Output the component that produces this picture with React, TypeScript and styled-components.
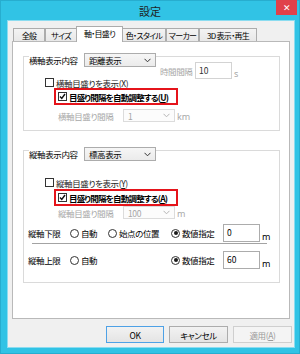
import React from "react";
import styled, { createGlobalStyle } from "styled-components";

const Global = createGlobalStyle`
  html, body { margin: 0; padding: 0; background: #fff; }
  body {
    font-family: "Noto Sans CJK JP", "Noto Sans", sans-serif;
    font-size: 8.5px;
    color: #000;
    letter-spacing: -0.4px;
    font-feature-settings: "palt";
  }
  * { box-sizing: border-box; }
`;

const Window = styled.div`
  width: 300px;
  height: 354px;
  background: #31c3e5;
  box-shadow: inset 0 0 0 1px #27adcf;
  display: flex;
  flex-direction: column;
`;

const TitleBar = styled.div`
  height: 21px;
  flex: none;
  display: grid;
  grid-template-columns: 1fr auto 1fr;
  align-items: start;
  padding: 0 3px;
`;

const Title = styled.div`
  grid-column: 2;
  font-size: 11px;
  line-height: 23px;
  letter-spacing: 0;
  color: #1e1e1e;
  font-feature-settings: normal;
`;

const CloseButton = styled.div`
  grid-column: 3;
  justify-self: end;
  width: 21px;
  height: 15px;
  background: #e0414a;
  color: #fff;
  font-family: "DejaVu Sans", sans-serif;
  font-weight: bold;
  font-size: 9px;
  display: flex;
  align-items: center;
  justify-content: center;
`;

const Client = styled.div`
  flex: 1;
  margin: 0 6px 7px 8px;
  background: #f0f0f0;
  box-shadow: 0 0 0 1px #8bdcf0;
  display: flex;
  flex-direction: column;
  padding-top: 5px;
`;

const TabStrip = styled.div`
  display: flex;
  align-items: flex-end;
  height: 15px;
  margin-left: 5px;
  position: relative;
  z-index: 1;
`;

const Tab = styled.div<{ $w: number; $active?: boolean }>`
  width: ${(p) => p.$w}px;
  height: ${(p) => (p.$active ? 16 : 13)}px;
  margin-bottom: ${(p) => (p.$active ? -1 : 0)}px;
  border: 1px solid #acacac;
  border-bottom: none;
  margin-left: ${(p) => (p.$active ? -1 : 0)}px;
  margin-right: ${(p) => (p.$active ? -1 : 0)}px;
  background: ${(p) => (p.$active ? "#fff" : "linear-gradient(#f3f3f3, #e8e8e8)")};
  display: flex;
  align-items: center;
  justify-content: center;
  padding-bottom: ${(p) => (p.$active ? 2 : 0)}px;
  white-space: nowrap;
  font-size: 8px;
  letter-spacing: -0.7px;
`;

const Panel = styled.div`
  margin-left: 4px;
  width: 278px;
  height: 278px;
  background: #fff;
  border: 1px solid #b9b9b9;
  display: flex;
  flex-direction: column;
  padding: 14px 9px 0 10px;
`;

const GroupBox = styled.div<{ $top: number; $pt: number; $pb: number }>`
  position: relative;
  margin-top: ${(p) => p.$top}px;
  border: 1px solid #dadada;
  padding-top: ${(p) => p.$pt}px;
  padding-bottom: ${(p) => p.$pb}px;
  display: flex;
  flex-direction: column;
`;

const Legend = styled.div`
  position: absolute;
  top: -4px;
  left: 5px;
  display: flex;
  align-items: center;
  height: 14px;
`;

const LegendLabel = styled.span`
  background: #fff;
  width: 55px;
  white-space: nowrap;
`;

const Combo = styled.div<{ $w: number; $h: number; $disabled?: boolean }>`
  width: ${(p) => p.$w}px;
  height: ${(p) => p.$h}px;
  border: 1px solid ${(p) => (p.$disabled ? "#dcdcdc" : "#acacac")};
  background: ${(p) => (p.$disabled ? "#fcfcfc" : "linear-gradient(#f6f6f6, #ebebeb)")};
  color: ${(p) => (p.$disabled ? "#a6a6a6" : "#000")};
  display: flex;
  align-items: center;
  justify-content: space-between;
  padding: 0 4px 0 4px;
  flex: none;
`;

const Chevron = ({ color }: { color: string }) => (
  <svg width="7" height="5" viewBox="0 0 7 5">
    <polyline points="0.5,0.8 3.5,3.8 6.5,0.8" fill="none" stroke={color} strokeWidth="1" />
  </svg>
);

const TimeRow = styled.div`
  display: flex;
  align-items: center;
  padding-left: 136px;
  height: 17px;
`;

const GrayLabel = styled.span<{ $w?: number }>`
  color: #a8a8a8;
  width: ${(p) => (p.$w ? `${p.$w}px` : "auto")};
  flex: none;
  white-space: nowrap;
`;

const TextInput = styled.div<{ $h: number; $dim?: boolean }>`
  width: 37px;
  height: ${(p) => p.$h}px;
  border: 1px solid ${(p) => (p.$dim ? "#d3d3d3" : "#acacac")};
  background: #fff;
  color: ${(p) => (p.$dim ? "#333" : "#000")};
  padding: 1px 0 0 3px;
  line-height: 12px;
  letter-spacing: 0;
  flex: none;
`;

const Unit = styled.span<{ $dim?: boolean }>`
  align-self: flex-end;
  margin-left: 2px;
  line-height: 10px;
  font-size: 9px;
  letter-spacing: 0;
  color: ${(p) => (p.$dim ? "#a8a8a8" : "#000")};
  font-family: "Noto Sans", sans-serif;
`;

const CheckRow = styled.div<{ $mt: number }>`
  display: flex;
  align-items: center;
  gap: 2px;
  padding-left: 21px;
  height: 11px;
  margin-top: ${(p) => p.$mt}px;
  color: #222;
  white-space: nowrap;
`;

const Box = styled.span`
  width: 9px;
  height: 9px;
  border: 1px solid #333;
  background: #fff;
  flex: none;
  display: flex;
  align-items: center;
  justify-content: center;
`;

const Check = () => (
  <svg width="7" height="7" viewBox="0 0 7 7">
    <polyline points="1,3.5 2.8,5.5 6,1" fill="none" stroke="#111" strokeWidth="1.4" />
  </svg>
);

const Highlight = styled.div<{ $mt: number }>`
  margin-top: ${(p) => p.$mt}px;
  margin-left: 30px;
  width: 124px;
  height: 17px;
  border: 2px solid #e5141b;
  display: flex;
  align-items: center;
  padding-left: 2px;
  gap: 2px;
  font-weight: bold;
  letter-spacing: -0.8px;
  white-space: nowrap;
`;

const Key = styled.span`
  text-decoration: underline;
`;

const IntervalRow = styled.div<{ $mt: number }>`
  margin-top: ${(p) => p.$mt}px;
  display: flex;
  align-items: center;
  padding-left: 34px;
  height: 13px;
`;

const RadioRow = styled.div<{ $mt: number }>`
  margin-top: ${(p) => p.$mt}px;
  display: grid;
  grid-template-columns: 42px 38px 63px 52px 37px auto;
  align-items: center;
  padding-left: 4px;
  height: 18px;
`;

const RadioOption = styled.span`
  display: flex;
  align-items: center;
  gap: 2px;
  white-space: nowrap;
`;

const Circle = styled.span<{ $on?: boolean }>`
  width: 9px;
  height: 9px;
  border-radius: 50%;
  border: 1px solid #333;
  background: #fff;
  flex: none;
  display: flex;
  align-items: center;
  justify-content: center;
  &::after {
    content: "";
    width: 4px;
    height: 4px;
    border-radius: 50%;
    background: ${(p) => (p.$on ? "#1a1a1a" : "transparent")};
  }
`;

const Separator = styled.div`
  margin-top: 1px;
  margin-left: 8px;
  width: 235px;
  height: 1px;
  background: #a3a3a3;
`;

const ButtonRow = styled.div`
  display: flex;
  justify-content: flex-end;
  gap: 5px;
  margin-top: 7px;
  padding-right: 2px;
`;

const Button = styled.div<{ $w: number; $default?: boolean; $disabled?: boolean }>`
  width: ${(p) => p.$w}px;
  height: 17px;
  border: 1px solid ${(p) => (p.$default ? "#4ea1e6" : p.$disabled ? "#cfcfcf" : "#acacac")};
  background: ${(p) => (p.$disabled ? "#f4f4f4" : "linear-gradient(#f2f2f2, #e4e4e4)")};
  color: ${(p) => (p.$disabled ? "#9a9a9a" : "#000")};
  display: flex;
  align-items: center;
  justify-content: center;
`;

const tabs: { label: string; w: number; active?: boolean }[] = [
  { label: "全般", w: 32 },
  { label: "サイズ", w: 32 },
  { label: "軸・目盛り", w: 47, active: true },
  { label: "色・スタイル", w: 44 },
  { label: "マーカー", w: 33 },
  { label: "3D 表示・再生", w: 58 },
];

export default function App() {
  return (
    <>
      <Global />
      <Window>
        <TitleBar>
          <Title>設定</Title>
          <CloseButton>✕</CloseButton>
        </TitleBar>
        <Client>
          <TabStrip>
            {tabs.map((t) => (
              <Tab key={t.label} $w={t.w} $active={t.active}>
                {t.label}
              </Tab>
            ))}
          </TabStrip>
          <Panel>
            <GroupBox $top={0} $pt={5} $pb={8}>
              <Legend>
                <LegendLabel>横軸表示内容</LegendLabel>
                <Combo $w={72} $h={14}>
                  <span>距離表示</span>
                  <Chevron color="#333" />
                </Combo>
              </Legend>
              <TimeRow>
                <GrayLabel $w={35}>時間間隔</GrayLabel>
                <TextInput $h={17} $dim>10</TextInput>
                <Unit $dim>s</Unit>
              </TimeRow>
              <CheckRow $mt={-2}>
                <Box />
                <span>
                  横軸目盛りを表示(<Key>X</Key>)
                </span>
              </CheckRow>
              <Highlight $mt={0}>
                <Box>
                  <Check />
                </Box>
                <span>
                  目盛り間隔を自動調整する(<Key>U</Key>)
                </span>
              </Highlight>
              <IntervalRow $mt={4}>
                <GrayLabel $w={65}>横軸目盛り間隔</GrayLabel>
                <Combo $w={52} $h={13} $disabled>
                  <span>1</span>
                  <Chevron color="#b5b5b5" />
                </Combo>
                <Unit $dim>km</Unit>
              </IntervalRow>
            </GroupBox>

            <GroupBox $top={19} $pt={26} $pb={13}>
              <Legend>
                <LegendLabel>縦軸表示内容</LegendLabel>
                <Combo $w={72} $h={14}>
                  <span>標高表示</span>
                  <Chevron color="#333" />
                </Combo>
              </Legend>
              <CheckRow $mt={0}>
                <Box />
                <span>
                  縦軸目盛りを表示(<Key>Y</Key>)
                </span>
              </CheckRow>
              <Highlight $mt={1}>
                <Box>
                  <Check />
                </Box>
                <span>
                  目盛り間隔を自動調整する(<Key>A</Key>)
                </span>
              </Highlight>
              <IntervalRow $mt={0}>
                <GrayLabel $w={65}>縦軸目盛り間隔</GrayLabel>
                <Combo $w={52} $h={13} $disabled>
                  <span>100</span>
                  <Chevron color="#b5b5b5" />
                </Combo>
                <Unit $dim>m</Unit>
              </IntervalRow>
              <RadioRow $mt={5}>
                <span>縦軸下限</span>
                <RadioOption>
                  <Circle />
                  自動
                </RadioOption>
                <RadioOption>
                  <Circle />
                  始点の位置
                </RadioOption>
                <RadioOption>
                  <Circle $on />
                  数値指定
                </RadioOption>
                <TextInput $h={18}>0</TextInput>
                <Unit>m</Unit>
              </RadioRow>
              <Separator />
              <RadioRow $mt={7}>
                <span>縦軸上限</span>
                <RadioOption>
                  <Circle />
                  自動
                </RadioOption>
                <span />
                <RadioOption>
                  <Circle $on />
                  数値指定
                </RadioOption>
                <TextInput $h={18}>60</TextInput>
                <Unit>m</Unit>
              </RadioRow>
            </GroupBox>
          </Panel>
          <ButtonRow>
            <Button $w={58} $default>
              OK
            </Button>
            <Button $w={59}>キャンセル</Button>
            <Button $w={59} $disabled>
              適用(<Key>A</Key>)
            </Button>
          </ButtonRow>
        </Client>
      </Window>
    </>
  );
}
